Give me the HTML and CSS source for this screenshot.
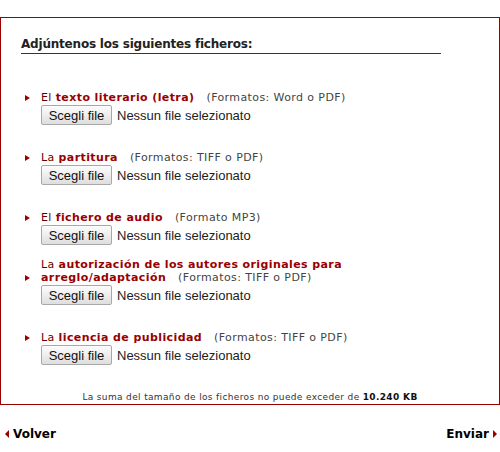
FILE: index.html
```html
<!DOCTYPE html>
<html>
<head>
  <meta name="viewport" content="width=device-width, initial-scale=1.0">
  <link rel="stylesheet" href="styles.css">
</head>
<body>
  <div class="panel">
    <h2 class="title">Adjúntenos los siguientes ficheros:</h2>

    <ul class="files">
      <li class="item">
        <span class="bullet"></span>
        <p class="label">El <b>texto literario (letra)</b><span class="fmt">(Formatos: Word o PDF)</span></p>
        <div class="picker"><button type="button">Scegli file</button><span class="none">Nessun file selezionato</span></div>
      </li>
      <li class="item">
        <span class="bullet"></span>
        <p class="label">La <b>partitura</b><span class="fmt">(Formatos: TIFF o PDF)</span></p>
        <div class="picker"><button type="button">Scegli file</button><span class="none">Nessun file selezionato</span></div>
      </li>
      <li class="item">
        <span class="bullet"></span>
        <p class="label">El <b>fichero de audio</b><span class="fmt">(Formato MP3)</span></p>
        <div class="picker"><button type="button">Scegli file</button><span class="none">Nessun file selezionato</span></div>
      </li>
      <li class="item">
        <span class="bullet"></span>
        <p class="label">La <b>autorización de los autores originales para arreglo/adaptación</b><span class="fmt">(Formatos: TIFF o PDF)</span></p>
        <div class="picker"><button type="button">Scegli file</button><span class="none">Nessun file selezionato</span></div>
      </li>
      <li class="item">
        <span class="bullet"></span>
        <p class="label">La <b>licencia de publicidad</b><span class="fmt">(Formatos: TIFF o PDF)</span></p>
        <div class="picker"><button type="button">Scegli file</button><span class="none">Nessun file selezionato</span></div>
      </li>
    </ul>

    <p class="note">La suma del tamaño de los ficheros no puede exceder de <b>10.240 KB</b></p>
  </div>

  <div class="nav">
    <a class="back" href="#">Volver</a>
    <a class="send" href="#">Enviar</a>
  </div>
</body>
</html>
```

FILE: styles.css
```css
html, body {
  margin: 0;
  padding: 0;
  background-color: #fff;
  font-family: "DejaVu Sans", Verdana, sans-serif;
}

.panel {
  margin-top: 17px;
  width: 500px;
  box-sizing: border-box;
  border: 1px solid #990000;
  padding: 19px 20px 1px 20px;
}

.title {
  margin: 0 0 11px 0;
  width: 420px;
  font-size: 12px;
  letter-spacing: -0.2px;
  line-height: 15px;
  color: #222;
  border-bottom: 1px solid #b00000;
  padding-bottom: 1px;
}

.files {
  list-style: none;
  margin: 0;
  padding: 0;
}

.item {
  display: grid;
  grid-template-columns: 20px 370px;
  align-content: end;
  height: 60px;
}

.bullet {
  grid-row: 1;
  grid-column: 1;
  align-self: end;
  margin: 0 0 3px 4px;
  width: 0;
  height: 0;
  border-top: 3.5px solid transparent;
  border-bottom: 3.5px solid transparent;
  border-left: 5px solid #990000;
}

.label {
  grid-row: 1;
  grid-column: 2;
  margin: 0;
  font-size: 11px;
  letter-spacing: 0.4px;
  line-height: 13px;
  color: #660000;
}

.label b {
  color: #990000;
}

.fmt {
  margin-left: 12px;
  color: #444;
}

.picker {
  grid-row: 2;
  grid-column: 2;
  margin-top: 1px;
  display: flex;
  align-items: center;
  font-family: "Liberation Sans", Arial, sans-serif;
  font-size: 13px;
}

.picker button {
  height: 20px;
  width: 71px;
  padding: 0;
  border: 1px solid #a8a8a8;
  border-radius: 2px;
  background: linear-gradient(#fdfdfd, #dedede);
  font-family: "Liberation Sans", Arial, sans-serif;
  font-size: 13px;
  color: #111;
}

.none {
  margin-left: 5px;
  color: #222;
}

.note {
  margin: 26px 0 0 0;
  text-align: center;
  font-size: 9px;
  letter-spacing: 0.35px;
  line-height: 12px;
  color: #333;
}

.note b {
  color: #111;
}

.nav {
  display: flex;
  justify-content: space-between;
  align-items: center;
  margin-top: 22px;
  padding: 0 3px 0 5px;
}

.nav a {
  display: flex;
  align-items: center;
  gap: 4px;
  font-size: 12px;
  font-weight: bold;
  color: #000;
  text-decoration: none;
}

.back::before,
.send::after {
  content: "";
  width: 0;
  height: 0;
  border-top: 4px solid transparent;
  border-bottom: 4px solid transparent;
}

.back::before {
  border-right: 4px solid #990000;
}

.send::after {
  border-left: 4px solid #990000;
}
```
